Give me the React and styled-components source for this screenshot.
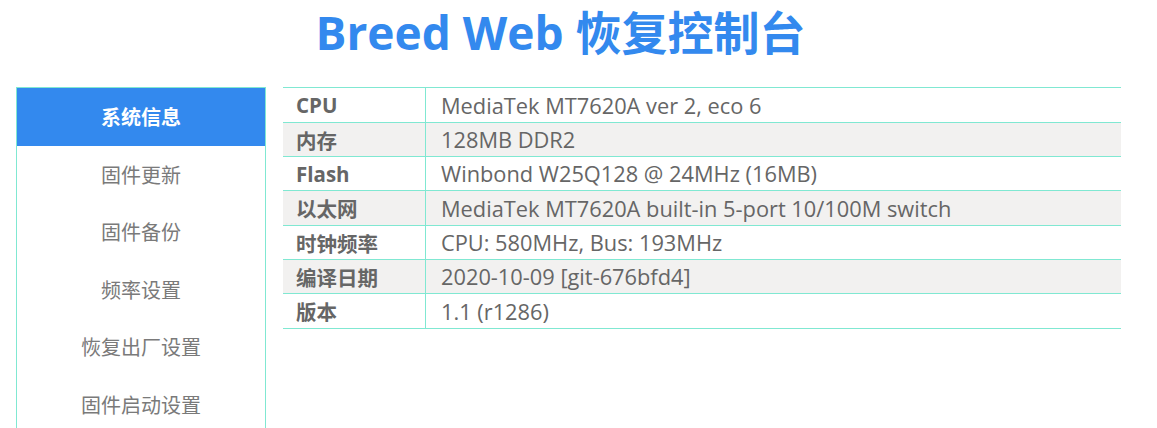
import React from 'react';
import styled, { createGlobalStyle } from 'styled-components';

const GlobalStyle = createGlobalStyle`
  html, body { margin: 0; padding: 0; background: #fff; }
  body { font-family: "Open Sans", "Noto Sans CJK SC", sans-serif; }
`;

const Page = styled.div`
  width: 1121px;
`;

const Title = styled.h1`
  margin: 0;
  height: 87px;
  padding-top: 2px;
  box-sizing: border-box;
  text-align: center;
  font-size: 46px;
  line-height: 60px;
  font-weight: 700;
  color: #3389ee;
`;

const Body = styled.div`
  display: flex;
  align-items: flex-start;
  gap: 17px;
  padding-left: 16px;
`;

const Nav = styled.ul`
  list-style: none;
  margin: 0;
  padding: 0;
  width: 250px;
  box-sizing: border-box;
  border: 1px solid #80e8d2;
  flex-shrink: 0;
`;

const NavItem = styled.li`
  height: 57.5px;
  display: flex;
  align-items: center;
  justify-content: center;
  font-size: 20px;
  color: ${(p) => (p.$active ? '#fff' : '#7a7a7a')};
  font-weight: ${(p) => (p.$active ? 700 : 400)};
  background: ${(p) => (p.$active ? '#3389ee' : 'transparent')};
`;

const Table = styled.table`
  flex: 1;
  border-collapse: separate;
  border-spacing: 0;
  border-top: 1px solid #80e8d2;
  color: #666;
`;

const Row = styled.tr`
  background: ${(p) => (p.$shade ? '#f2f1f0' : '#fff')};

  & > * {
    height: 33px;
    border-bottom: 1px solid #80e8d2;
  }
  &:nth-child(3n + 1) > * {
    height: 34px;
  }
`;

const Label = styled.th`
  width: 129px;
  padding: 0 0 0 13px;
  text-align: left;
  font-size: 20.5px;
  font-weight: 700;
  border-right: 1px solid #80e8d2;
`;

const Value = styled.td`
  padding: 0 0 0 15px;
  font-size: 21.8px;
  font-weight: 400;
`;

const navItems = ['系统信息', '固件更新', '固件备份', '频率设置', '恢复出厂设置', '固件启动设置'];

const info = [
  ['CPU', 'MediaTek MT7620A ver 2, eco 6'],
  ['内存', '128MB DDR2'],
  ['Flash', 'Winbond W25Q128 @ 24MHz (16MB)'],
  ['以太网', 'MediaTek MT7620A built-in 5-port 10/100M switch'],
  ['时钟频率', 'CPU: 580MHz, Bus: 193MHz'],
  ['编译日期', '2020-10-09 [git-676bfd4]'],
  ['版本', '1.1 (r1286)'],
];

export default function App() {
  return (
    <Page>
      <GlobalStyle />
      <Title>Breed Web 恢复控制台</Title>
      <Body>
        <Nav>
          {navItems.map((n, i) => (
            <NavItem key={n} $active={i === 0}>{n}</NavItem>
          ))}
        </Nav>
        <Table>
          <tbody>
            {info.map(([k, v], i) => (
              <Row key={k} $shade={i % 2 === 1}>
                <Label>{k}</Label>
                <Value>{v}</Value>
              </Row>
            ))}
          </tbody>
        </Table>
      </Body>
    </Page>
  );
}
